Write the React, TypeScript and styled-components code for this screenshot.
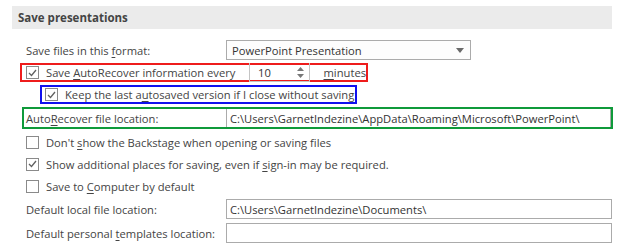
import styled, { createGlobalStyle } from "styled-components";

const Global = createGlobalStyle`
  body {
    margin: 0;
    background: #fff;
    font-family: "Open Sans", "Noto Sans", sans-serif;
    font-size: 11.2px;
    color: #444;
  }
`;

const Page = styled.div`
  width: 624px;
  height: 250px;
  padding-top: 6px;
  box-sizing: border-box;
  overflow: hidden;
`;

const Header = styled.div`
  margin: 0 12px;
  height: 23px;
  line-height: 23px;
  padding-left: 6px;
  background: #ebebeb;
  font-weight: 700;
  font-size: 11.5px;
  color: #444;
`;

const Row = styled.div<{ $top?: number; $h?: number; $left?: number; $pad?: number }>`
  display: flex;
  align-items: center;
  box-sizing: border-box;
  margin-top: ${(p) => p.$top ?? 0}px;
  margin-left: ${(p) => p.$left ?? 26}px;
  padding-left: ${(p) => p.$pad ?? 0}px;
  height: ${(p) => p.$h ?? 22}px;
  white-space: nowrap;
`;

const Outlined = styled(Row)<{ $color: string; $w: number }>`
  border: 2px solid ${(p) => p.$color};
  width: ${(p) => p.$w}px;
`;

const Label = styled.span<{ $w?: number; $gap?: number }>`
  display: inline-block;
  width: ${(p) => (p.$w ? `${p.$w}px` : "auto")};
  margin-left: ${(p) => p.$gap ?? 0}px;
  flex-shrink: 0;
`;

const Box = styled.span`
  width: 11px;
  height: 11px;
  border: 1px solid #8a8a8a;
  background: #fff;
  margin-right: 7px;
  flex-shrink: 0;
  display: flex;
  align-items: center;
  justify-content: center;
`;

const Field = styled.div<{ $w: number; $h?: number; $open?: boolean }>`
  width: ${(p) => p.$w}px;
  height: ${(p) => p.$h ?? 20}px;
  box-sizing: border-box;
  border: 1px solid #ababab;
  ${(p) => (p.$open ? "border-top: none; border-bottom: none;" : "")}
  background: #fff;
  padding-left: 3px;
  display: flex;
  align-items: center;
  color: #333;
  flex-shrink: 0;
`;

const Select = styled(Field)`
  justify-content: space-between;
  padding: 0 6px 0 5px;
  background: #fdfdfd;
`;

const Spin = styled.div`
  width: 65px;
  height: 19px;
  margin: -2px 0 -2px 0;
  box-sizing: border-box;
  border: 1px solid #c4c4c4;
  border-top: none;
  display: flex;
  align-items: center;
  justify-content: space-between;
  padding: 0 5px 0 8px;
  color: #333;
`;

const Arrows = styled.span`
  display: flex;
  flex-direction: column;
  gap: 3px;
`;

const U = styled.span`
  text-decoration: underline;
  text-underline-offset: 2px;
`;

const Check = ({ on }: { on?: boolean }) => (
  <Box>
    {on && (
      <svg width="9" height="8" viewBox="0 0 9 8">
        <path d="M1 4 L3.5 6.5 L8 1" fill="none" stroke="#606060" strokeWidth="1.3" />
      </svg>
    )}
  </Box>
);

const Tri = ({ up }: { up?: boolean }) => (
  <svg width="7" height="4" viewBox="0 0 7 4">
    <path d={up ? "M0 4 L3.5 0 L7 4Z" : "M0 0 L7 0 L3.5 4Z"} fill="#777" />
  </svg>
);

export default function App() {
  return (
    <Page>
      <Global />
      <Header>Save presentations</Header>

      <Row $top={11} $h={20}>
        <Label $w={200}>
          Save files in this <U>f</U>ormat:
        </Label>
        <Select $w={245}>
          <span>PowerPoint Presentation</span>
          <svg width="8" height="5" viewBox="0 0 8 5">
            <path d="M0 0 L8 0 L4 5Z" fill="#6a6a6a" />
          </svg>
        </Select>
      </Row>

      <Outlined $top={3} $h={19} $left={20} $pad={4} $color="#ee1c1c" $w={348}>
        <Check on />
        <Label $w={203}>
          Save <U>A</U>utoRecover information every
        </Label>
        <Spin>
          <span>10</span>
          <Arrows>
            <Tri up />
            <Tri />
          </Arrows>
        </Spin>
        <Label $gap={13}>
          <U>m</U>inutes
        </Label>
      </Outlined>

      <Outlined $top={3} $h={19} $left={40} $pad={3} $color="#1010ee" $w={317}>
        <Check on />
        <Label>
          Keep the last a<U>u</U>tosaved version if I close without saving
        </Label>
      </Outlined>

      <Outlined $top={3} $h={22} $left={22} $pad={2} $color="#0f9a3a" $w={591}>
        <Label $w={200}>
          Auto<U>R</U>ecover file location:
        </Label>
        <Field $w={385} $h={18} $open>
          C:\Users\GarnetIndezine\AppData\Roaming\Microsoft\PowerPoint\
        </Field>
      </Outlined>

      <Row $top={2}>
        <Check />
        <Label>
          Don't <U>s</U>how the Backstage when opening or saving files
        </Label>
      </Row>
      <Row>
        <Check on />
        <Label>
          Show additional places for saving, even if <U>s</U>ign-in may be required.
        </Label>
      </Row>
      <Row>
        <Check />
        <Label>
          Save to <U>C</U>omputer by default
        </Label>
      </Row>

      <Row $top={1}>
        <Label $w={200}>
          Default local f<U>i</U>le location:
        </Label>
        <Field $w={386}>C:\Users\GarnetIndezine\Documents\</Field>
      </Row>
      <Row $top={2}>
        <Label $w={200}>
          Default personal <U>t</U>emplates location:
        </Label>
        <Field $w={386} />
      </Row>
    </Page>
  );
}
